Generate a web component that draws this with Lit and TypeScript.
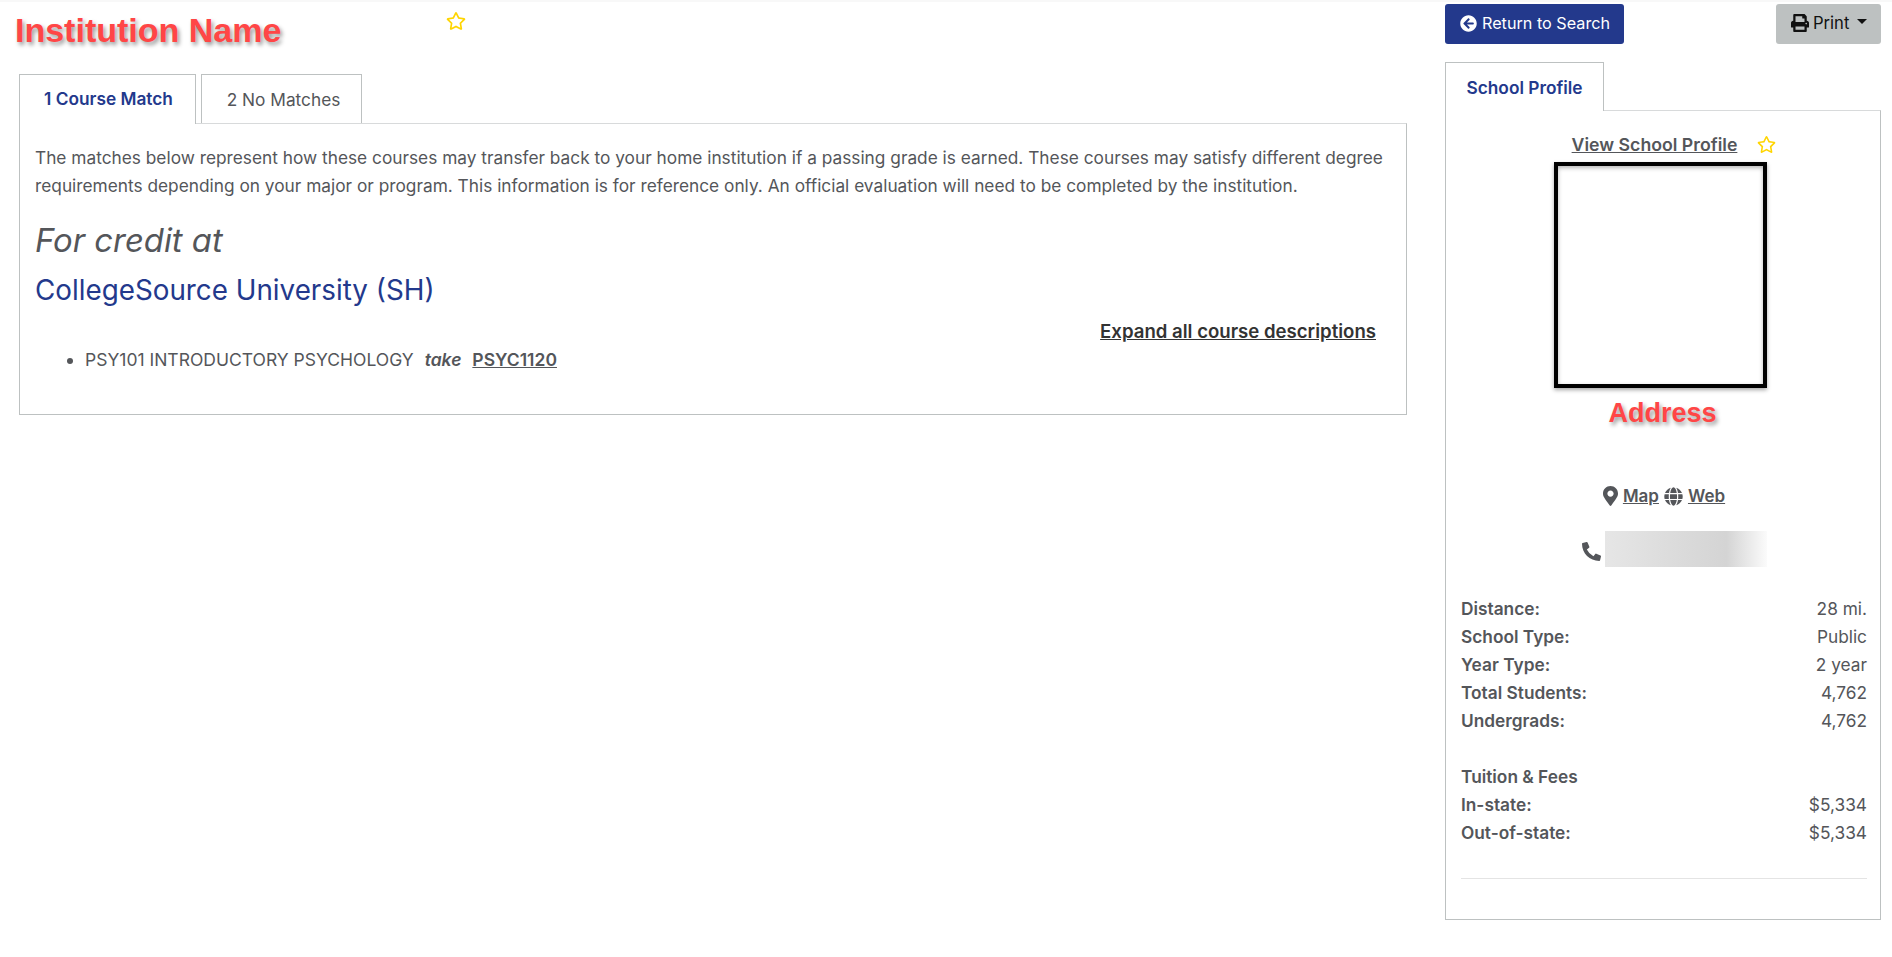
import { LitElement, html, css, svg } from "lit";
import { customElement } from "lit/decorators.js";

const icon = (vb: string, d: string, cls: string) =>
  html`<svg class=${cls} viewBox=${vb} aria-hidden="true" fill="currentColor">${svg`<path d=${d}></path>`}</svg>`;

const STAR = "M528.1 171.5L382 150.2 316.7 17.8c-11.7-23.6-45.6-23.9-57.4 0L194 150.2 47.9 171.5c-26.2 3.8-36.7 36.1-17.7 54.6l105.7 103-25 145.5c-4.5 26.3 23.2 46 46.4 33.7L288 439.6l130.7 68.7c23.2 12.2 50.9-7.4 46.4-33.7l-25-145.5 105.7-103c19-18.5 8.5-50.8-17.7-54.6zM388.6 312.3l23.7 138.4L288 385.4l-124.3 65.3 23.7-138.4-100.6-98 139-20.2 62.2-126 62.2 126 139 20.2-100.6 98z";
const ARROW = "M256 504C119 504 8 393 8 256S119 8 256 8s248 111 248 248-111 248-248 248zm28.9-143.6L209.4 288H392c13.3 0 24-10.7 24-24v-16c0-13.3-10.7-24-24-24H209.4l75.5-72.4c9.7-9.3 9.9-24.8.4-34.3l-11-10.9c-9.4-9.4-24.6-9.4-33.9 0L107.7 239c-9.4 9.4-9.4 24.6 0 33.9l132.7 132.7c9.4 9.4 24.6 9.4 33.9 0l11-10.9c9.5-9.5 9.3-25-.4-34.3z";
const PRINT = "M448 192V77.25c0-8.49-3.37-16.62-9.37-22.63L393.37 9.37c-6-6-14.14-9.37-22.63-9.37H96C78.33 0 64 14.33 64 32v160c-35.35 0-64 28.65-64 64v112c0 8.84 7.16 16 16 16h48v96c0 17.67 14.33 32 32 32h320c17.67 0 32-14.33 32-32v-96h48c8.84 0 16-7.16 16-16V256c0-35.35-28.65-64-64-64zm-64 256H128v-96h256v96zm0-224H128V64h192v48c0 8.84 7.16 16 16 16h48v96zm48 72c-13.25 0-24-10.75-24-24 0-13.26 10.75-24 24-24s24 10.74 24 24c0 13.25-10.75 24-24 24z";
const MARKER = "M172.268 501.67C26.97 291.031 0 269.413 0 192 0 85.961 85.961 0 192 0s192 85.961 192 192c0 77.413-26.97 99.031-172.268 309.67-9.535 13.774-29.93 13.773-39.464 0zM192 272c44.183 0 80-35.817 80-80s-35.817-80-80-80-80 35.817-80 80 35.817 80 80 80z";
const GLOBE = "M336.5 160C322 70.7 287.8 8 248 8s-74 62.7-88.5 152h177zM152 256c0 22.2 1.2 43.5 3.3 64h185.3c2.1-20.5 3.3-41.8 3.3-64s-1.2-43.5-3.3-64H155.3c-2.1 20.5-3.3 41.8-3.3 64zm324.7-96c-28.6-67.9-86.5-120.4-158-141.6 24.4 33.8 41.2 84.7 50 141.6h108zM177.2 18.4C105.8 39.6 47.8 92.1 19.3 160h108c8.7-56.9 25.5-107.8 49.9-141.6zM487.4 192H372.7c2.1 21 3.3 42.5 3.3 64s-1.2 43-3.3 64h114.6c5.5-20.5 8.6-41.8 8.6-64s-3.1-43.5-8.5-64zM120 256c0-21.5 1.2-43 3.3-64H8.6C3.2 212.5 0 233.8 0 256s3.2 43.5 8.6 64h114.6c-2-21-3.2-42.5-3.2-64zm39.5 96c14.5 89.3 48.7 152 88.5 152s74-62.7 88.5-152h-177zm159.3 141.6c71.4-21.2 129.4-73.7 158-141.6h-108c-8.8 56.9-25.6 107.8-50 141.6zM19.3 352c28.6 67.9 86.5 120.4 158 141.6-24.4-33.8-41.2-84.7-50-141.6h-108z";
const PHONE = "M497.39 361.8l-112-48a24 24 0 0 0-28 6.9l-49.6 60.6A370.66 370.66 0 0 1 130.6 204.11l60.6-49.6a23.94 23.94 0 0 0 6.9-28l-48-112A24.16 24.16 0 0 0 122.6.61l-104 24A24 24 0 0 0 0 48c0 256.5 207.9 464 464 464a24 24 0 0 0 23.4-18.6l24-104a24.29 24.29 0 0 0-14.01-27.6z";

const STATS1 = [
  ["Distance:", "28 mi."],
  ["School Type:", "Public"],
  ["Year Type:", "2 year"],
  ["Total Students:", "4,762"],
  ["Undergrads:", "4,762"],
];
const STATS2 = [
  ["In-state:", "$5,334"],
  ["Out-of-state:", "$5,334"],
];

@customElement("app-root")
export class AppRoot extends LitElement {
  static styles = css`
    :host {
      display: block;
      width: 1892px;
      height: 957px;
      box-sizing: border-box;
      background: #fff;
      color: #54565a;
      font-family: Inter, Lato, sans-serif;
      font-size: 17.3px;
      overflow: hidden;
      border-top: 2px solid #f8f8f8;
    }
    * { box-sizing: border-box; }
    a { color: inherit; }
    .page {
      display: flex;
      gap: 38px;
      padding: 2px 11px 0 19px;
    }
    .left { width: 1388px; flex: none; }
    .right { width: 436px; flex: none; }
    .title-row {
      height: 70px;
      position: relative;
    }
    .title {
      margin: 0;
      margin-left: -4px;
      font: bold 34px/38px "Liberation Sans", Arial, sans-serif;
      padding-top: 7px;
      color: #ff4646;
      text-shadow: 2px 3px 4px rgba(0, 0, 0, 0.4);
    }
    .star { color: #ffd500; width: 20px; height: 18px; display: block; }
    .title-star { position: absolute; left: 427px; top: 8px; }
    .tabs { display: flex; gap: 6px; height: 50px; position: relative; z-index: 1; }
    .tab {
      border: 1px solid #bdc1c1;
      border-bottom: none;
      height: 49px;
      background: #fff;
      display: flex;
      align-items: center;
      justify-content: center;
      color: #54565a;
    }
    .tab.active {
      height: 50px;
      color: #23398c;
      font-weight: 600;
      padding-bottom: 2px;
      padding-left: 2px;
    }
    .t1 { width: 177px; }
    .t2 { width: 161px; margin-left: -1px; padding-left: 4px; }
    .panel {
      border: 1px solid #bdc1c1;
      border-top-color: #d8dadb;
      margin-top: -1px;
      height: 292px;
      padding: 20px 15px 0;
    }
    .panel p { margin: 0; line-height: 28px; }
    .for {
      margin: 18px 0 0;
      font-size: 32.8px;
      line-height: 45px;
      font-style: italic;
      font-weight: 400;
    }
    .uni {
      margin: 8px 0 0;
      font-size: 27.8px;
      line-height: 38px;
      font-weight: 400;
      color: #23398c;
    }
    .expand-row { display: flex; justify-content: flex-end; padding-right: 15px; margin-top: 8px; }
    .expand { font-weight: 600; font-size: 18.6px; color: #333; line-height: 28px; }
    .list { margin: 1px 0 0; padding: 0 0 0 50px; line-height: 28px; font-size: 17.5px; }
    .list li { padding: 0; }
    .take { font-style: italic; font-weight: 600; margin: 0 6px; }
    .code { font-weight: 600; }
    .topbtns { display: flex; justify-content: space-between; height: 56px; }
    .btn {
      height: 40px;
      border-radius: 3px;
      display: flex;
      align-items: center;
      padding-bottom: 2px;
      font-size: 16.2px;
    }
    .btn-primary { width: 179px; background: #23398c; color: #fff; padding-left: 15px; gap: 5px; }
    .btn-secondary { width: 105px; background: #bdc1c1; color: #111; padding-left: 15px; gap: 4px; font-size: 16.6px; }
    .i-arrow { width: 17px; height: 17px; }
    .i-print { width: 18px; height: 18px; }
    .caret {
      width: 0; height: 0;
      border-left: 5px solid transparent;
      border-right: 5px solid transparent;
      border-top: 5px solid #111;
      margin-left: 4px;
      margin-top: -3px;
    }
    .side-tab {
      width: 159px;
      height: 49px;
      border: 1px solid #bdc1c1;
      border-bottom: none;
      position: relative;
      z-index: 1;
      background: #fff;
      display: flex;
      align-items: center;
      justify-content: center;
      color: #23398c;
      font-weight: 600;
      margin-top: 2px;
    }
    .side {
      border: 1px solid #bdc1c1;
      border-top-color: #d8dadb;
      margin-top: -1px;
      height: 810px;
      padding: 21px 13px 0 15px;
    }
    .view { display: flex; justify-content: center; align-items: center; gap: 20px; height: 24px; padding-left: 20px; font-size: 17.7px; }
    .view a { font-weight: 600; }
    .view .star { width: 19px; height: 17px; }
    .photo {
      width: 213px;
      height: 226px;
      border: 4px solid #000;
      margin: 6px 0 0 93px;
      box-shadow: 0 2px 4px rgba(0,0,0,0.35), inset 0 2px 4px rgba(0,0,0,0.3);
      background: #fff;
    }
    .addr {
      text-align: center;
      font: bold 27px/34px "Liberation Sans", Arial, sans-serif;
      color: #ff4646;
      text-shadow: 2px 3px 4px rgba(0, 0, 0, 0.4);
      margin-top: 8px;
      padding-right: 3px;
      height: 34px;
    }
    .links {
      display: flex;
      justify-content: center;
      align-items: center;
      margin-top: 53px;
      height: 26px;
      gap: 5px;
      font-weight: 600;
      font-size: 17px;
    }
    .i-marker { width: 15px; height: 20px; color: #54565a; }
    .i-globe { width: 19px; height: 19px; }
    .phone { display: flex; align-items: center; margin-top: 22px; height: 36px; padding-left: 121px; }
    .i-phone { width: 19px; height: 19px; color: #54565a; margin-right: 4px; margin-top: 5px; }
    .blur {
      width: 162px;
      height: 36px;
      overflow: hidden;
      background: linear-gradient(90deg, #e6e6e6 0%, #dcdcdc 40%, #d4d4d4 75%, #fbfbfb 100%);
    }
    .stats { margin-top: 28px; line-height: 28px; }
    .row { display: flex; justify-content: space-between; height: 28px; }
    .row b, .head { font-weight: 600; }
    .head { margin-top: 28px; height: 28px; }
    hr { border: none; border-top: 1px solid #e4e4e4; margin: 31px 0 0; }
  `;

  private row(r: string[]) {
    return html`<div class="row"><b>${r[0]}</b><span>${r[1]}</span></div>`;
  }

  render() {
    return html`
      <div class="page">
        <div class="left">
          <div class="title-row">
            <h1 class="title">Institution Name</h1>
            ${icon("0 0 576 512", STAR, "star title-star")}
          </div>
          <div class="tabs">
            <div class="tab active t1">1 Course Match</div>
            <div class="tab t2">2 No Matches</div>
          </div>
          <div class="panel">
            <p>The matches below represent how these courses may transfer back to your home institution if a passing grade is earned. These courses may satisfy different degree requirements depending on your major or program. This information is for reference only. An official evaluation will need to be completed by the institution.</p>
            <h2 class="for">For credit at</h2>
            <h3 class="uni">CollegeSource University (SH)</h3>
            <div class="expand-row"><a class="expand" href="#">Expand all course descriptions</a></div>
            <ul class="list">
              <li>PSY101 INTRODUCTORY PSYCHOLOGY <span class="take">take</span> <a class="code" href="#">PSYC1120</a></li>
            </ul>
          </div>
        </div>
        <div class="right">
          <div class="topbtns">
            <div class="btn btn-primary">${icon("0 0 512 512", ARROW, "i-arrow")}Return to Search</div>
            <div class="btn btn-secondary">${icon("0 0 512 512", PRINT, "i-print")}Print<span class="caret"></span></div>
          </div>
          <div class="side-tab">School Profile</div>
          <div class="side">
            <div class="view"><a href="#">View School Profile</a>${icon("0 0 576 512", STAR, "star")}</div>
            <div class="photo"></div>
            <div class="addr">Address</div>
            <div class="links">
              ${icon("0 0 384 512", MARKER, "i-marker")}<a href="#">Map</a>
              ${icon("0 0 496 512", GLOBE, "i-globe")}<a href="#">Web</a>
            </div>
            <div class="phone">${icon("0 0 512 512", PHONE, "i-phone")}<div class="blur"></div></div>
            <div class="stats">
              ${STATS1.map((r) => this.row(r))}
              <div class="head">Tuition &amp; Fees</div>
              ${STATS2.map((r) => this.row(r))}
            </div>
            <hr />
          </div>
        </div>
      </div>
    `;
  }
}
